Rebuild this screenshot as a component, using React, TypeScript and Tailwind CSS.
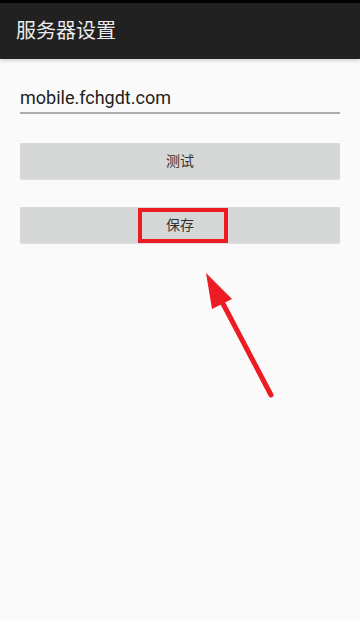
import React from "react";

export default function App() {
  return (
    <div
      className="w-[360px] h-[620px] bg-[#fafafa] flex flex-col relative overflow-hidden"
      style={{ fontFamily: 'Roboto, "Noto Sans CJK SC", sans-serif' }}
    >
      <div className="h-[3px] bg-black" />
      <div className="h-[56px] bg-[#212121] flex items-center pl-[16px] shadow-[0_2px_3px_rgba(0,0,0,0.15)] z-10">
        <span className="text-[20px] text-[#ececec] leading-none">服务器设置</span>
      </div>
      <div className="flex flex-col px-[20px] pt-[23px]">
        <div className="h-[28px] flex items-end">
          <span className="text-[18px] text-[#222] leading-none pb-[3px]">mobile.fchgdt.com</span>
        </div>
        <div className="h-[2px] bg-[#ababab] mt-[2px]" />
        <button className="mt-[29px] h-[36px] bg-[#d6d7d7] rounded-[2px] shadow-[0_1px_1px_rgba(0,0,0,0.12)] flex items-center justify-center text-[14px] text-[#333]">
          测试
        </button>
        <button className="mt-[28px] h-[36px] bg-[#d6d7d7] rounded-[2px] shadow-[0_1px_1px_rgba(0,0,0,0.12)] flex items-center justify-center text-[14px] text-[#333] relative">
          保存
          <span className="absolute left-[118px] top-[1px] w-[90px] h-[35px] border-[4px] border-[#ed1c24]" />
        </button>
      </div>
      <svg className="absolute left-0 top-0" width="360" height="620" viewBox="0 0 360 620">
        <line x1="271" y1="395" x2="220" y2="298" stroke="#ed1c24" strokeWidth="5" strokeLinecap="round" />
        <polygon points="206,273 212,309 232,299" fill="#ed1c24" />
      </svg>
    </div>
  );
}
